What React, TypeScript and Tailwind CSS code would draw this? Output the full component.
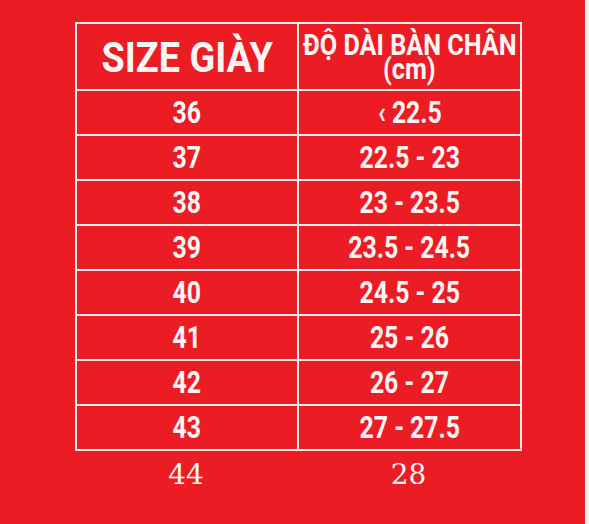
import React from "react";

const rows = [
  { size: "36", foot: "‹ 22.5" },
  { size: "37", foot: "22.5 - 23" },
  { size: "38", foot: "23 - 23.5" },
  { size: "39", foot: "23.5 - 24.5" },
  { size: "40", foot: "24.5 - 25" },
  { size: "41", foot: "25 - 26" },
  { size: "42", foot: "26 - 27" },
  { size: "43", foot: "27 - 27.5" },
];

function Cell({ children, right }: { children: React.ReactNode; right?: boolean }) {
  return (
    <div
      className={`h-[45px] flex items-center justify-center border-t-2 border-[#fbeeee] ${
        right ? "" : "border-r-2"
      }`}
    >
      <span className="inline-block scale-x-[0.8] text-[31px] font-bold leading-none text-[#fdf6f4]">
        {children}
      </span>
    </div>
  );
}

export default function App() {
  return (
    <div className="flex w-[589px] h-[524px] bg-[#f6f0ef] font-['Roboto',sans-serif]">
      <div className="w-[585px] h-full bg-[#ec1c24] border-r border-[#d8262b] pl-[75px] pt-[22px]">
        <div className="w-[447px] border-2 border-[#fbeeee] grid grid-cols-[222px_221px]">
          <div className="h-[65px] flex items-center justify-center border-r-2 border-[#fbeeee]">
            <span className="inline-block scale-x-[0.9] text-[42px] font-bold leading-none text-[#fdf6f4] pt-[3px]">
              SIZE GIÀY
            </span>
          </div>
          <div className="h-[65px] flex flex-col items-center justify-center pt-[3px] text-[#fdf6f4]">
            <span className="inline-block scale-x-[0.87] text-[29px] font-bold leading-[23px] whitespace-nowrap">
              ĐỘ DÀI BÀN CHÂN
            </span>
            <span className="inline-block scale-x-[0.87] text-[29px] font-bold leading-[25px]">
              (cm)
            </span>
          </div>
          {rows.map((r) => (
            <React.Fragment key={r.size}>
              <Cell>{r.size}</Cell>
              <Cell right>{r.foot}</Cell>
            </React.Fragment>
          ))}
        </div>
        <div className="w-[447px] grid grid-cols-[220px_227px] pt-[10px] font-['DejaVu_Serif',serif] text-[28px] leading-none text-[#fdf6f4]">
          <div className="text-center pl-[2px]">44</div>
          <div className="text-center">28</div>
        </div>
      </div>
    </div>
  );
}
